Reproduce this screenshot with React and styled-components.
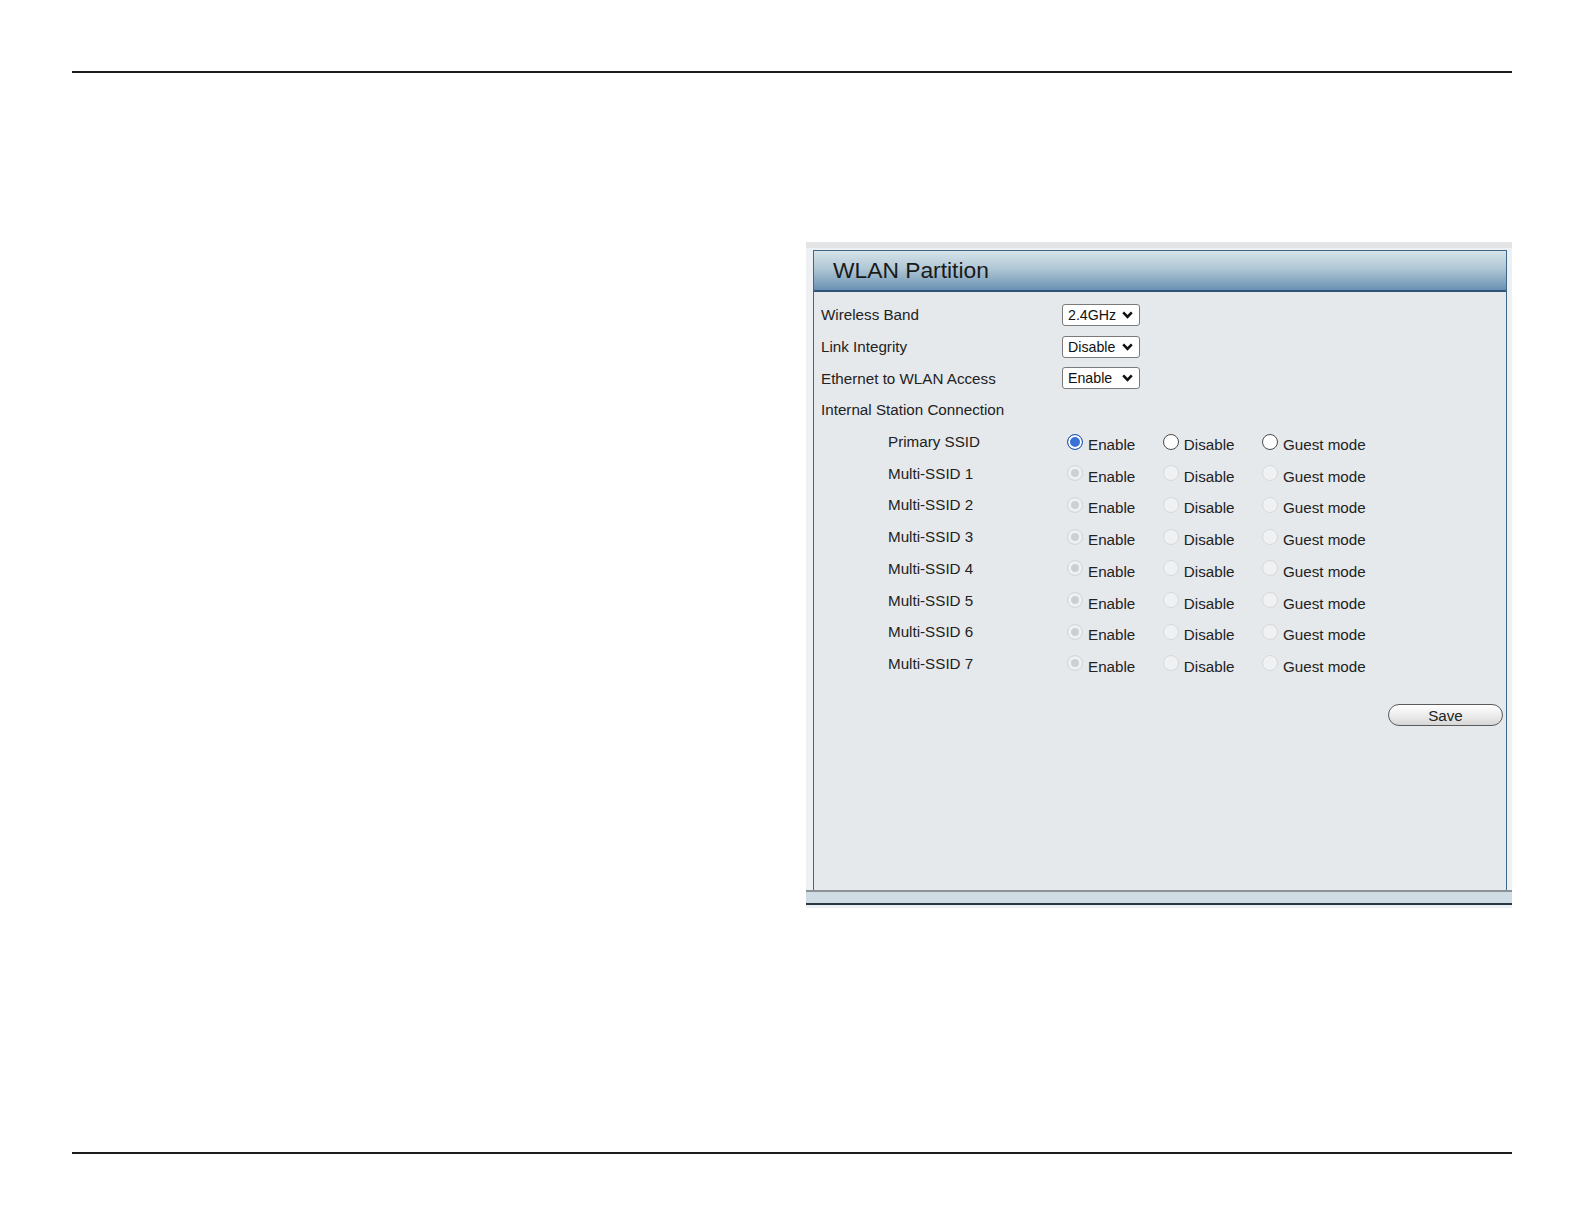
import React from 'react';
import styled, { createGlobalStyle } from 'styled-components';

const GlobalStyle = createGlobalStyle`
    body {
        margin: 0;
        background: #ffffff;
        font-family: "Liberation Sans", Arial, sans-serif;
    }
`

const Page = styled.div`
    width: 1584px;
    min-height: 1224px;
    padding: 71px 72px 0;
    box-sizing: border-box;
    display: flex;
    flex-direction: column;
`

const Rule = styled.div`
    height: 2px;
    background: #1c1c1c;
    margin-top: ${props => props.$top || 0}px;
`

const Stage = styled.div`
    display: flex;
    margin-top: 169px;
    padding-left: 734px;
`

const Frame = styled.div`
    width: 708px;
    background: #eef1f3;
    border-top: 6px solid #e2e4e6;
    display: flex;
    flex-direction: column;
`

const FrameInner = styled.div`
    padding: 2px 5px 0 7px;
`

const Panel = styled.div`
    border: 1px solid #3f6788;
    border-bottom: none;
    background: #e6e9ec;
`

const PanelHeader = styled.div`
    height: 39px;
    display: flex;
    align-items: center;
    padding-left: 19px;
    background: linear-gradient(#d6e3e9 0%, #b0c7d5 45%, #6a91b4 100%);
    border-bottom: 2px solid #2f5479;
`

const Title = styled.h1`
    margin: 0;
    font-size: 22.8px;
    font-weight: 400;
    color: #1a1a1a;
`

const PanelBody = styled.div`
    height: 598px;
    padding: 7px 0 0 7px;
    box-sizing: border-box;
`

const FieldRow = styled.div`
    display: grid;
    grid-template-columns: 241px 1fr;
    align-items: center;
    height: 31.7px;
`

const FieldLabel = styled.span`
    font-size: 15.2px;
    color: #222;
    padding-left: ${props => props.$indent ? 67 : 0}px;
`

const SelectWrap = styled.div`
    position: relative;
    width: 78px;
    height: 22px;
`

const Select = styled.select`
    appearance: none;
    width: 78px;
    height: 22px;
    margin: 0;
    padding: 0 0 0 5px;
    border: 1px solid #7a7a7a;
    border-radius: 3px;
    background: #fff;
    color: #111;
    font-family: "Liberation Sans", Arial, sans-serif;
    font-size: 14.2px;
`

const Chevron = styled.svg`
    position: absolute;
    right: 7px;
    top: 7px;
    pointer-events: none;
`

const Options = styled.div`
    display: flex;
    gap: 27.5px;
    padding-left: 5px;
`

const Option = styled.label`
    display: flex;
    align-items: center;
    gap: 5px;
`

const Radio = styled.input`
    appearance: none;
    margin: 0;
    width: 16px;
    height: 16px;
    border-radius: 50%;
    box-sizing: border-box;
    border: 1px solid #4a4a4a;
    background: #fff;

    &:checked {
        border-color: #2458b3;
        background: #3a71d6;
        box-shadow: inset 0 0 0 2px #fff;
    }

    &:disabled {
        border-color: #d6d9dc;
        background: #eff1f3;
    }

    &:disabled:checked {
        background: #cdd0d3;
        box-shadow: inset 0 0 0 3px #eff1f3;
    }
`

const OptionText = styled.span`
    font-size: 15.2px;
    color: #222;
    padding-top: 6px;
`

const Actions = styled.div`
    display: flex;
    justify-content: flex-end;
    padding-right: 3px;
    margin-top: 25px;
`

const SaveButton = styled.button`
    width: 115px;
    height: 22px;
    border: 1px solid #5a5a5a;
    border-radius: 11px;
    background: linear-gradient(#ffffff, #e9e9e9 60%, #d6d6d6);
    font-family: "Liberation Sans", Arial, sans-serif;
    font-size: 15.2px;
    color: #222;
    padding: 0;
`

const FrameFooter = styled.div`
    height: 11px;
    border-top: 2px solid #8d9297;
    border-bottom: 2px solid #2b3742;
    background: #d0dce3;
    margin-bottom: 3px;
`

const SETTINGS = [
    { label: 'Wireless Band', options: ['2.4GHz', '5GHz'], value: '2.4GHz' },
    { label: 'Link Integrity', options: ['Disable', 'Enable'], value: 'Disable' },
    { label: 'Ethernet to WLAN Access', options: ['Enable', 'Disable'], value: 'Enable' },
]

const SSIDS = ['Primary SSID', 'Multi-SSID 1', 'Multi-SSID 2', 'Multi-SSID 3', 'Multi-SSID 4', 'Multi-SSID 5', 'Multi-SSID 6', 'Multi-SSID 7']

const MODES = ['Enable', 'Disable', 'Guest mode']

const Dropdown = ({ options, value }) => (
    <SelectWrap>
        <Select defaultValue={value}>
            {options.map(o => <option key={o}>{o}</option>)}
        </Select>
        <Chevron width="11" height="8" viewBox="0 0 11 8">
            <path d="M1.2 1.4 L5.5 5.8 L9.8 1.4" fill="none" stroke="#111" strokeWidth="2.6" />
        </Chevron>
    </SelectWrap>
)

const App = () => {
    return <>
        <GlobalStyle />
        <Page>
            <Rule />
            <Stage>
                <Frame>
                    <FrameInner>
                        <Panel>
                            <PanelHeader>
                                <Title>WLAN Partition</Title>
                            </PanelHeader>
                            <PanelBody>
                                {SETTINGS.map(s => (
                                    <FieldRow key={s.label}>
                                        <FieldLabel>{s.label}</FieldLabel>
                                        <Dropdown options={s.options} value={s.value} />
                                    </FieldRow>
                                ))}
                                <FieldRow>
                                    <FieldLabel>Internal Station Connection</FieldLabel>
                                </FieldRow>
                                {SSIDS.map((name, i) => (
                                    <FieldRow key={name}>
                                        <FieldLabel $indent>{name}</FieldLabel>
                                        <Options>
                                            {MODES.map(m => (
                                                <Option key={m}>
                                                    <Radio type="radio" name={name} defaultChecked={m === 'Enable'} disabled={i > 0} />
                                                    <OptionText>{m}</OptionText>
                                                </Option>
                                            ))}
                                        </Options>
                                    </FieldRow>
                                ))}
                                <Actions>
                                    <SaveButton>Save</SaveButton>
                                </Actions>
                            </PanelBody>
                        </Panel>
                    </FrameInner>
                    <FrameFooter />
                </Frame>
            </Stage>
            <Rule $top={244} />
        </Page>
    </>
}

export default App;
